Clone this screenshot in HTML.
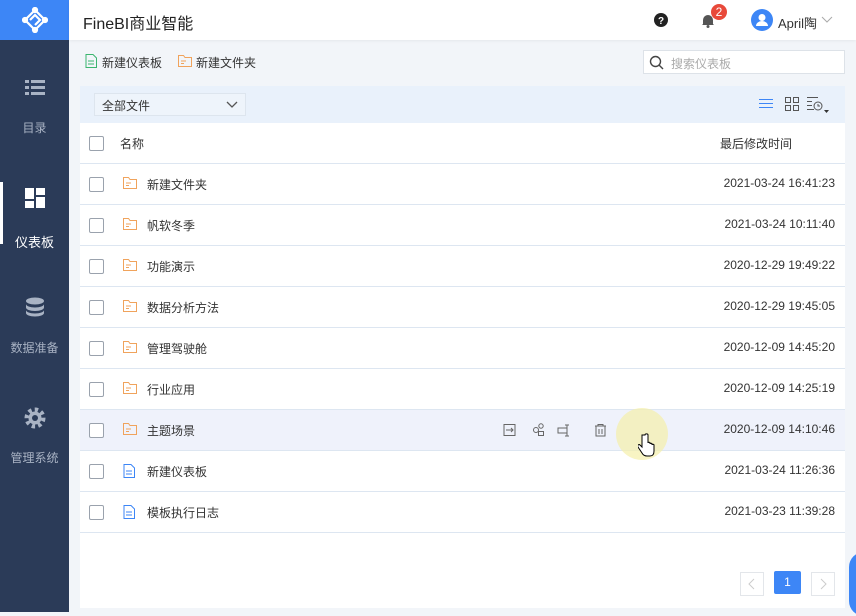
<!DOCTYPE html>
<html><head><meta charset="utf-8"><style>
*{margin:0;padding:0;box-sizing:border-box}
body{width:856px;height:612px;overflow:hidden;background:#f2f5f9;font-family:"Liberation Sans","Noto Sans CJK SC",sans-serif;font-size:12px;color:#333;position:relative}
.side{position:absolute;left:0;top:0;width:69px;height:612px;background:#2b3b58}
.logo{width:69px;height:40px;background:#3d86f6;display:flex;align-items:center;justify-content:center}
.nav{position:absolute;left:0;width:69px;text-align:center;color:#a9b3c4;font-size:12px}
.nav.act{color:#fff}
.nav.act:before{content:"";position:absolute;left:0;top:-6px;width:3px;height:62px;background:#fff}
.top{position:absolute;left:69px;top:0;right:0;height:40px;background:#fff;box-shadow:0 1px 3px rgba(0,0,0,.06)}
.title{position:absolute;left:14px;top:10px;font-size:16px;color:#222}
.main{position:absolute;left:69px;top:40px;right:0;bottom:0}
.panel{position:absolute;left:11px;top:46px;width:765px;bottom:4px;background:#fff}
.bar{height:37px;background:#e9f1fb;position:relative}
.sel{position:absolute;left:14px;top:7px;width:152px;height:23px;border:1px solid #dde5ee;background:#eef4fb;padding:3px 0 0 7px}
.row{height:41px;border-bottom:1px solid #dde6f1;position:relative;font-size:12px}
.cb{position:absolute;left:9px;top:13px;width:15px;height:15px;border:1px solid #9aa2ad;border-radius:2px;background:#fff}
.nm{position:absolute;left:67px;top:12px}
.ic{position:absolute;left:43px;top:13px}
.tm{position:absolute;right:10px;top:12px}
.hov{background:#eff2fb}
</style></head><body>
<div class="side">
 <div class="logo"><svg width="26" height="26" viewBox="0 0 26 26" fill="none" stroke="#fff" stroke-width="2.2"><path d="M13 3 L23 13 L13 23 L3 13Z M8 13 L13 8 L18 13 L13 18"/><circle cx="13" cy="3" r="2" fill="#fff"/><circle cx="3" cy="13" r="2" fill="#fff"/><circle cx="13" cy="23" r="2" fill="#fff"/><circle cx="23" cy="13" r="2" fill="#fff"/></svg></div>
 <div class="nav" style="top:79px"><svg width="20" height="18" viewBox="0 0 20 18" fill="#a9b3c4"><rect x="0" y="1" width="4" height="3"/><rect x="6" y="1" width="14" height="3"/><rect x="0" y="7" width="4" height="3"/><rect x="6" y="7" width="14" height="3"/><rect x="0" y="13" width="4" height="3"/><rect x="6" y="13" width="14" height="3"/></svg><div style="margin-top:19px">目录</div></div>
 <div class="nav act" style="top:188px"><svg width="20" height="20" viewBox="0 0 20 20" fill="#fff"><rect x="0" y="0" width="9" height="11"/><rect x="11" y="0" width="9" height="7"/><rect x="0" y="13" width="9" height="7"/><rect x="11" y="9" width="9" height="11"/></svg><div style="margin-top:21px;font-size:13px">仪表板</div></div>
 <div class="nav" style="top:297px"><svg width="20" height="20" viewBox="0 0 20 20" fill="#a9b3c4"><ellipse cx="10" cy="4" rx="9" ry="3.5"/><path d="M1 7c0 2 4 3.5 9 3.5s9-1.5 9-3.5v3.5c0 2-4 3.5-9 3.5s-9-1.5-9-3.5z"/><path d="M1 13c0 2 4 3.5 9 3.5s9-1.5 9-3.5v3c0 2-4 3.5-9 3.5s-9-1.5-9-3.5z"/></svg><div style="margin-top:19px">数据准备</div></div>
 <div class="nav" style="top:407px"><svg width="22" height="22" viewBox="0 0 22 22"><circle cx="11" cy="11" r="8" fill="none" stroke="#a9b3c4" stroke-width="5" stroke-dasharray="3.2 3"/><circle cx="11" cy="11" r="6.5" fill="#a9b3c4"/><circle cx="11" cy="11" r="3" fill="#2b3b58"/></svg><div style="margin-top:17px">管理系统</div></div>
</div>
<div class="top">
 <div class="title">FineBI商业智能</div>
 <svg style="position:absolute;left:585px;top:13px" width="14" height="14"><circle cx="7" cy="7" r="7" fill="#222"/><text x="7" y="11" fill="#fff" font-size="10" font-weight="bold" text-anchor="middle" font-family="Liberation Sans">?</text></svg>
 <svg style="position:absolute;left:632px;top:13px" width="14" height="15" viewBox="0 0 14 15"><path d="M2 11V7a5 5 0 0 1 10 0v4l1 1H1z" fill="#555"/><circle cx="7" cy="13.5" r="1.5" fill="#555"/></svg>
 <div style="position:absolute;left:642px;top:4px;width:16px;height:16px;border-radius:8px;background:#e8493a;color:#fff;font-size:12px;text-align:center;line-height:16px">2</div>
 <svg style="position:absolute;left:682px;top:9px" width="22" height="22"><circle cx="11" cy="11" r="11" fill="#3d86f6"/><circle cx="11" cy="8.5" r="3.5" fill="#fff"/><path d="M5 17a6 5 0 0 1 12 0z" fill="#fff"/></svg>
 <div style="position:absolute;left:709px;top:13px;font-size:13px">April陶</div>
 <svg style="position:absolute;left:752px;top:16px" width="12" height="8"><path d="M1 1l5 5 5-5" stroke="#aaa" fill="none"/></svg>
</div>
<div class="main">
 <svg style="position:absolute;left:16px;top:14px" width="12" height="14" viewBox="0 0 12 14" fill="none" stroke="#3bb56f"><path d="M1 .5h7l3.5 3.5v9.5h-10.5z M3 7h6 M3 10h6"/></svg>
 <div style="position:absolute;left:33px;top:14px">新建仪表板</div>
 <svg style="position:absolute;left:109px;top:15px" width="14" height="12" viewBox="0 0 14 12" fill="none" stroke="#f0a35c"><path d="M.5 .5h5l1.5 2h6.5v9h-13z M3 6h5 M3 8.5h3"/></svg>
 <div style="position:absolute;left:127px;top:14px">新建文件夹</div>
 <div style="position:absolute;left:574px;top:10px;width:202px;height:24px;border:1px solid #dde2e8;background:#fff"><svg style="position:absolute;left:5px;top:4px" width="15" height="15"><circle cx="6.5" cy="6.5" r="5" stroke="#444" stroke-width="1.4" fill="none"/><path d="M10 10l4 4" stroke="#444" stroke-width="1.4"/></svg><span style="position:absolute;left:27px;top:4px;color:#aaa">搜索仪表板</span></div>
 <div class="panel">
  <div class="bar"><div class="sel">全部文件<svg style="position:absolute;right:7px;top:7px" width="12" height="8"><path d="M1 1l5 5 5-5" stroke="#555" fill="none" stroke-width="1.3"/></svg></div>
   <svg style="position:absolute;left:679px;top:12px" width="14" height="12" stroke="#3d86f6"><path d="M0 1.5h14M0 5.5h14M0 9.5h14"/></svg>
   <svg style="position:absolute;left:705px;top:11px" width="14" height="14" fill="none" stroke="#555"><rect x=".5" y=".5" width="5" height="5"/><rect x="8.5" y=".5" width="5" height="5"/><rect x=".5" y="8.5" width="5" height="5"/><rect x="8.5" y="8.5" width="5" height="5"/></svg>
   <svg style="position:absolute;left:727px;top:10px" width="26" height="18" fill="none" stroke="#555"><path d="M0 1.5h11M0 5.5h5M0 9.5h5M0 13.5h7"/><circle cx="11" cy="10" r="4"/><path d="M11 8v2h2"/><path d="M17 14h5l-2.5 3z" fill="#333" stroke="none"/></svg>
  </div>
  <div class="row"><div class="cb"></div><div class="nm" style="left:40px">名称</div><div class="tm" style="right:53px">最后修改时间</div></div>
  <div class="row"><div class="cb"></div><svg class="ic" width="14" height="12" viewBox="0 0 14 12" fill="none" stroke="#f0a35c"><path d="M.5 .5h5l1.5 2h6.5v9h-13z M3 6h5 M3 8.5h3"/></svg><div class="nm">新建文件夹</div><div class="tm">2021-03-24 16:41:23</div></div>
  <div class="row"><div class="cb"></div><svg class="ic" width="14" height="12" viewBox="0 0 14 12" fill="none" stroke="#f0a35c"><path d="M.5 .5h5l1.5 2h6.5v9h-13z M3 6h5 M3 8.5h3"/></svg><div class="nm">帆软冬季</div><div class="tm">2021-03-24 10:11:40</div></div>
  <div class="row"><div class="cb"></div><svg class="ic" width="14" height="12" viewBox="0 0 14 12" fill="none" stroke="#f0a35c"><path d="M.5 .5h5l1.5 2h6.5v9h-13z M3 6h5 M3 8.5h3"/></svg><div class="nm">功能演示</div><div class="tm">2020-12-29 19:49:22</div></div>
  <div class="row"><div class="cb"></div><svg class="ic" width="14" height="12" viewBox="0 0 14 12" fill="none" stroke="#f0a35c"><path d="M.5 .5h5l1.5 2h6.5v9h-13z M3 6h5 M3 8.5h3"/></svg><div class="nm">数据分析方法</div><div class="tm">2020-12-29 19:45:05</div></div>
  <div class="row"><div class="cb"></div><svg class="ic" width="14" height="12" viewBox="0 0 14 12" fill="none" stroke="#f0a35c"><path d="M.5 .5h5l1.5 2h6.5v9h-13z M3 6h5 M3 8.5h3"/></svg><div class="nm">管理驾驶舱</div><div class="tm">2020-12-09 14:45:20</div></div>
  <div class="row"><div class="cb"></div><svg class="ic" width="14" height="12" viewBox="0 0 14 12" fill="none" stroke="#f0a35c"><path d="M.5 .5h5l1.5 2h6.5v9h-13z M3 6h5 M3 8.5h3"/></svg><div class="nm">行业应用</div><div class="tm">2020-12-09 14:25:19</div></div>
  <div class="row hov"><div class="cb"></div><svg class="ic" width="14" height="12" viewBox="0 0 14 12" fill="none" stroke="#f0a35c"><path d="M.5 .5h5l1.5 2h6.5v9h-13z M3 6h5 M3 8.5h3"/></svg><div class="nm">主题场景</div>
   <svg style="position:absolute;left:423px;top:13px" width="110" height="15" fill="none" stroke="#666"><path d="M1 1.5h11v11h-11z M3 7h7M8 5l2 2-2 2"/><circle cx="33" cy="7" r="2.5"/><circle cx="38" cy="3" r="2.2"/><rect x="35.5" y="8.5" width="5" height="4"/><path d="M55 5h9v5h-9z M64 2v11M62 2h4M62 13h4"/><path d="M92 3h11M95 3v-1.5h5V3M93 3v10h9V3M96 6v5M99 6v5"/></svg>
   <div class="tm">2020-12-09 14:10:46</div></div>
  <div class="row"><div class="cb"></div><svg class="ic" width="12" height="14" viewBox="0 0 12 14" fill="none" stroke="#3d86f6"><path d="M1 .5h7l3.5 3.5v9.5h-10.5z M3 7h6 M3 10h6"/></svg><div class="nm">新建仪表板</div><div class="tm">2021-03-24 11:26:36</div></div>
  <div class="row"><div class="cb"></div><svg class="ic" width="12" height="14" viewBox="0 0 12 14" fill="none" stroke="#3d86f6"><path d="M1 .5h7l3.5 3.5v9.5h-10.5z M3 7h6 M3 10h6"/></svg><div class="nm">模板执行日志</div><div class="tm">2021-03-23 11:39:28</div></div>
  <div style="position:absolute;left:660px;top:486px;width:24px;height:24px;border:1px solid #e3e6ea"><svg width="22" height="22"><path d="M13 6l-5 5 5 5" stroke="#ccc" fill="none"/></svg></div>
  <div style="position:absolute;left:694px;top:485px;width:27px;height:23px;background:#3d86f6;border-radius:2px;color:#fff;text-align:center;line-height:23px">1</div>
  <div style="position:absolute;left:731px;top:486px;width:24px;height:24px;border:1px solid #e3e6ea"><svg width="22" height="22"><path d="M9 6l5 5-5 5" stroke="#ccc" fill="none"/></svg></div>
 </div>
</div>
<div style="position:absolute;left:616px;top:408px;width:52px;height:52px;border-radius:26px;background:rgba(245,240,170,.7)"></div>
<svg style="position:absolute;left:638px;top:433px" width="18" height="26" viewBox="0 0 18 26"><path d="M4 2v12l-2-2c-1-1-3 0-2 2l4 6c1 2 3 3 5 3h3c3 0 4-2 4-5v-6c0-1-2-1-2 0v-1c0-1-2-1-2 0v-1c0-1-2-1-2 0V2c0-1.5-3-1.5-3 0z" fill="#fff" stroke="#000"/></svg>
<div style="position:absolute;left:849px;top:552px;width:30px;height:64px;border-radius:30px;background:#3d86f6"></div>
</body></html>
